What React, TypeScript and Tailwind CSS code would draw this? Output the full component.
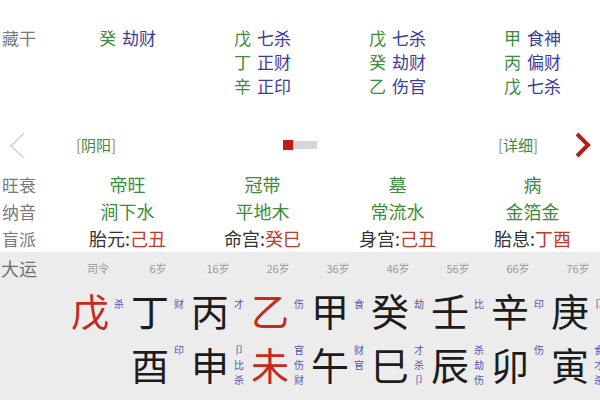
import React from "react";

const hidden: [string, string][][] = [
  [["癸", "劫财"]],
  [["戊", "七杀"], ["丁", "正财"], ["辛", "正印"]],
  [["戊", "七杀"], ["癸", "劫财"], ["乙", "伤官"]],
  [["甲", "食神"], ["丙", "偏财"], ["戊", "七杀"]],
];

const wangshuai = ["帝旺", "冠带", "墓", "病"];
const nayin = ["涧下水", "平地木", "常流水", "金箔金"];
const mangpai: [string, string][] = [
  ["胎元:", "己丑"],
  ["命宫:", "癸巳"],
  ["身宫:", "己丑"],
  ["胎息:", "丁酉"],
];

type Cell = {
  age: string;
  stem: string;
  stemRed?: boolean;
  stemAnn: string[];
  branch?: string;
  branchRed?: boolean;
  branchAnn: string[];
};

const dayun: Cell[] = [
  { age: "司令", stem: "戊", stemRed: true, stemAnn: ["杀"], branchAnn: [] },
  { age: "6岁", stem: "丁", stemAnn: ["财"], branch: "酉", branchAnn: ["印"] },
  { age: "16岁", stem: "丙", stemAnn: ["才"], branch: "申", branchAnn: ["卩", "比", "杀"] },
  { age: "26岁", stem: "乙", stemRed: true, stemAnn: ["伤"], branch: "未", branchRed: true, branchAnn: ["官", "伤", "财"] },
  { age: "36岁", stem: "甲", stemAnn: ["食"], branch: "午", branchAnn: ["财", "官"] },
  { age: "46岁", stem: "癸", stemAnn: ["劫"], branch: "巳", branchAnn: ["才", "杀", "卩"] },
  { age: "56岁", stem: "壬", stemAnn: ["比"], branch: "辰", branchAnn: ["杀", "劫", "伤"] },
  { age: "66岁", stem: "辛", stemAnn: ["印"], branch: "卯", branchAnn: ["伤"] },
  { age: "76岁", stem: "庚", stemAnn: ["卩"], branch: "寅", branchAnn: ["食", "才", "杀"] },
];

const Label = ({ children }: { children: React.ReactNode }) => (
  <div className="pl-[2px] text-[17px] text-[#7a7a7a]">{children}</div>
);

const BigCell = ({ ch, red, ann, top }: { ch?: string; red?: boolean; ann: string[]; top: string }) => (
  <div className="w-[60px] shrink-0 flex justify-center gap-[5px]">
    <div className={`w-[38px] text-[38px] leading-[44px] text-center ${red ? "text-[#c62a1f]" : "text-[#1c1c1c]"}`}>
      {ch ?? ""}
    </div>
    <div className={`w-[11px] flex flex-col text-[10px] leading-[15px] text-[#5353b5] ${top}`}>
      {ann.map((a, i) => (
        <span key={i}>{a}</span>
      ))}
    </div>
  </div>
);

export default function App() {
  return (
    <div className="w-[600px] h-[400px] overflow-hidden bg-white font-['Noto_Sans_CJK_SC','Noto_Sans',sans-serif]">
      {/* 藏干 */}
      <div className="pt-[26px] grid grid-cols-[60px_repeat(4,135px)] text-[17px] leading-[24px]">
        <Label>藏干</Label>
        {hidden.map((col, i) => (
          <div key={i} className="flex flex-col items-center">
            {col.map(([g, s], j) => (
              <div key={j} className="flex gap-[6px]">
                <span className="text-[#3d8b3d]">{g}</span>
                <span className="text-[#3b3b9e]">{s}</span>
              </div>
            ))}
          </div>
        ))}
      </div>

      {/* nav row */}
      <div className="mt-[27px] h-[40px] grid grid-cols-[76px_44px_163px_34px_181px_44px_1fr] items-center text-[15px]">
        <div className="pl-[8px]">
          <svg width="18" height="28" viewBox="0 0 18 28">
            <path d="M16 2 L3 15 L16 27" fill="none" stroke="#d2d2d2" strokeWidth="1.6" />
          </svg>
        </div>
        <div className="text-[#8a8a8a]">
          [<span className="text-[#3d8b3d]">阴阳</span>]
        </div>
        <div />
        <div className="flex items-center">
          <div className="w-[10px] h-[10px] bg-[#c41a1a]" />
          <div className="w-[24px] h-[8px] bg-[#d6d6d6]" />
        </div>
        <div />
        <div className="text-[#8a8a8a]">
          [<span className="text-[#3d8b3d]">详细</span>]
        </div>
        <div className="pl-[31px]">
          <svg width="20" height="28" viewBox="0 0 20 28">
            <path d="M4 3 L15 14 L4 25" fill="none" stroke="#b3201c" strokeWidth="4" />
          </svg>
        </div>
      </div>

      {/* 旺衰 纳音 盲派 */}
      <div className="mt-[6px] grid grid-cols-[60px_repeat(4,135px)] text-[18px] leading-[27px]">
        <Label>旺衰</Label>
        {wangshuai.map((v) => (
          <div key={v} className="text-center text-[#3d8b3d]">{v}</div>
        ))}
        <Label>纳音</Label>
        {nayin.map((v) => (
          <div key={v} className="text-center text-[#3d8b3d]">{v}</div>
        ))}
        <Label>盲派</Label>
        {mangpai.map(([k, v], i) => (
          <div key={i} className="text-center text-[#333]">
            {k}
            <span className="text-[#c0392b]">{v}</span>
          </div>
        ))}
      </div>

      {/* 大运 */}
      <div className="bg-[#ececec] h-[148px]">
        <div className="flex h-[32px] items-center">
          <div className="w-[68px] shrink-0 pl-[1px] text-[18px] text-[#6f6f6f]">大运</div>
          {dayun.map((c) => (
            <div key={c.age} className="w-[60px] shrink-0 text-center text-[11px] text-[#9a9a9a]">
              {c.age}
            </div>
          ))}
        </div>
        <div className="flex pt-[4px]">
          <div className="w-[68px] shrink-0" />
          {dayun.map((c) => (
            <BigCell key={c.age} ch={c.stem} red={c.stemRed} ann={c.stemAnn} top="pt-[8px]" />
          ))}
        </div>
        <div className="flex mt-[10px]">
          <div className="w-[68px] shrink-0" />
          {dayun.map((c) => (
            <BigCell key={c.age} ch={c.branch} red={c.branchRed} ann={c.branchAnn} top="pt-0" />
          ))}
        </div>
      </div>
    </div>
  );
}
